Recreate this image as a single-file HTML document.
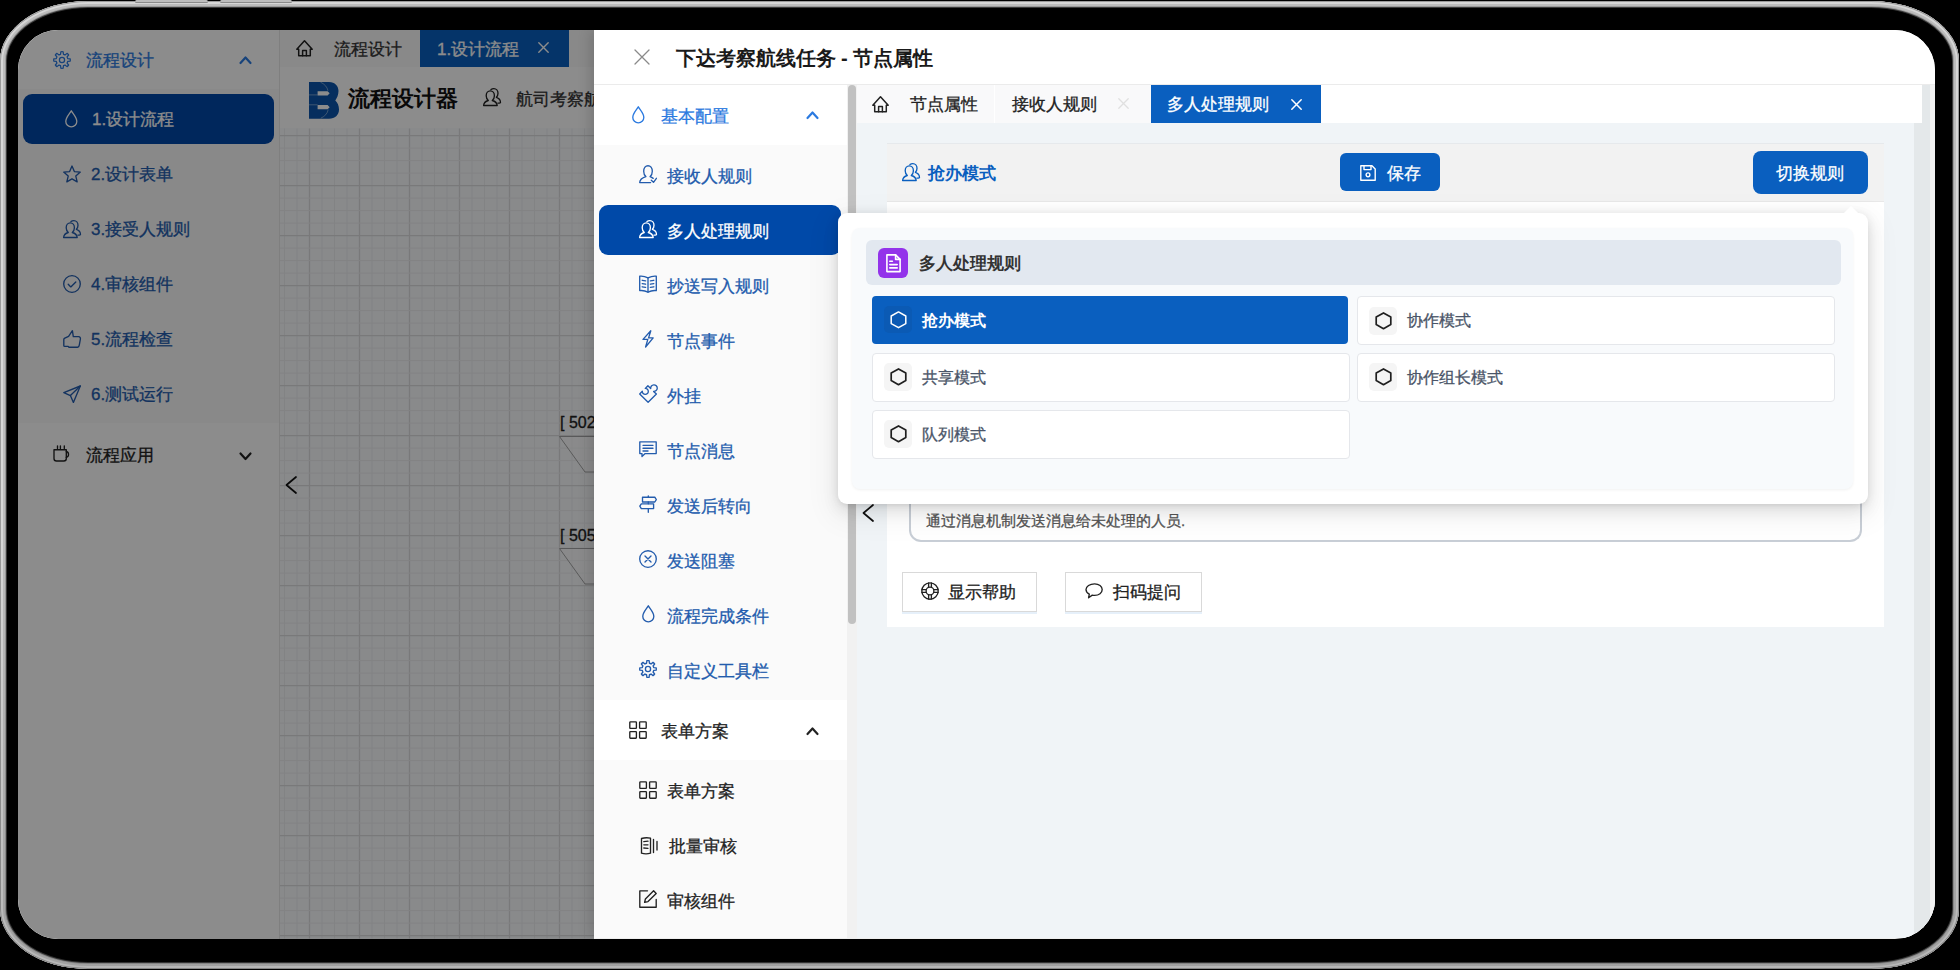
<!DOCTYPE html>
<html><head><meta charset="utf-8">
<style>
*{box-sizing:border-box;margin:0;padding:0}
html,body{width:1960px;height:970px;overflow:hidden;background:#000}
body{position:relative;font-family:"Liberation Sans",sans-serif;}
.abs{position:absolute}
svg.ic{position:absolute;overflow:visible}
.frame{position:absolute;left:0;top:1px;width:1959px;height:968px;border-radius:88px/60px;background:#000;
 box-shadow:inset 0 0 0 1px #9a9a9a,inset 0 0 0 3px #d6d6d6,inset 0 0 0 5px #bcbcbc,inset 0 0 0 6px #9a9a9a,inset 0 0 0 7px #3a3a3a}
.screen{position:absolute;left:18px;top:30px;width:1917px;height:909px;border-radius:40px;overflow:hidden;background:#fff}
.inner{position:absolute;left:-18px;top:-30px;width:1960px;height:970px}
.t{position:absolute;white-space:nowrap;line-height:1}
</style></head><body>
<div class="frame"></div>
<div class="abs" style="left:0;top:1px;width:1959px;height:968px;border-radius:88px/60px;background:linear-gradient(rgba(0,0,0,0) 55%,rgba(0,0,0,.15))"></div>
<div class="abs" style="left:135px;top:0;width:73px;height:3px;border-radius:2px;background:#bdbdbd;box-shadow:inset 0 -1px 0 #8a8a8a"></div>
<div class="abs" style="left:219.5px;top:0;width:72px;height:3px;border-radius:2px;background:#bdbdbd;box-shadow:inset 0 -1px 0 #8a8a8a"></div>
<div class="screen"><div class="inner">

<div class="abs" style="left:18px;top:30px;width:262px;height:909px;background:#fff;border-right:1px solid #e8e8e8"></div>
<div class="abs" style="left:18px;top:89px;width:261px;height:334px;background:#fafafa"></div>
<svg class="ic" style="left:53px;top:50.5px;width:18px;height:18px" viewBox="0 0 18 18" fill="none" stroke="#2b7ae0" stroke-width="1.25" stroke-linecap="round" stroke-linejoin="round"><path d="M7.57 3.28L7.84 0.78A8.3 8.3 0 0 1 10.16 0.78L10.43 3.28A5.9 5.9 0 0 1 12.04 3.94L12.04 3.94L14.00 2.37A8.3 8.3 0 0 1 15.63 4.00L14.06 5.96A5.9 5.9 0 0 1 14.72 7.57L14.72 7.57L17.22 7.84A8.3 8.3 0 0 1 17.22 10.16L14.72 10.43A5.9 5.9 0 0 1 14.06 12.04L14.06 12.04L15.63 14.00A8.3 8.3 0 0 1 14.00 15.63L12.04 14.06A5.9 5.9 0 0 1 10.43 14.72L10.43 14.72L10.16 17.22A8.3 8.3 0 0 1 7.84 17.22L7.57 14.72A5.9 5.9 0 0 1 5.96 14.06L5.96 14.06L4.00 15.63A8.3 8.3 0 0 1 2.37 14.00L3.94 12.04A5.9 5.9 0 0 1 3.28 10.43L3.28 10.43L0.78 10.16A8.3 8.3 0 0 1 0.78 7.84L3.28 7.57A5.9 5.9 0 0 1 3.94 5.96L3.94 5.96L2.37 4.00A8.3 8.3 0 0 1 4.00 2.37L5.96 3.94A5.9 5.9 0 0 1 7.57 3.28Z"/><circle cx="9" cy="9" r="2.6"/></svg>
<div class="t" style="left:86px;top:51.5px;font-size:17px;color:#2b7ae0;font-weight:normal;-webkit-text-stroke:0.3px #2b7ae0;">流程设计</div>
<svg class="ic" style="left:239px;top:54px;width:13px;height:12px" viewBox="0 0 13 12" fill="none" stroke="#2b7ae0" stroke-width="2.2" stroke-linecap="round" stroke-linejoin="round"><path d="M1.5 9L6.5 3.5L11.5 9"/></svg>
<div class="abs" style="left:23px;top:94px;width:251px;height:50px;background:#0047a8;border-radius:9px"></div>
<svg class="ic" style="left:65px;top:110px;width:13px;height:18px" viewBox="0 0 13 18" fill="none" stroke="#fff" stroke-width="1.3" stroke-linecap="round" stroke-linejoin="round"><path d="M6.3 0.8C5 3.5 0.8 7.3 0.8 11.4a5.5 5.5 0 0 0 11 0C11.8 7.3 7.6 3.5 6.3 0.8z"/></svg>
<div class="t" style="left:92px;top:111px;font-size:17px;color:#fff;font-weight:normal;-webkit-text-stroke:0.3px #fff;">1.设计流程</div>
<svg class="ic" style="left:63px;top:165px;width:18px;height:18px" viewBox="0 0 18 18" fill="none" stroke="#235cad" stroke-width="1.35" stroke-linecap="round" stroke-linejoin="round"><polygon points="9,1 11.35,6.56 17.3,7.08 12.8,11.04 14.17,16.8 9,13.8 3.83,16.8 5.2,11.04 0.7,7.08 6.65,6.56"/></svg>
<div class="t" style="left:91px;top:165.5px;font-size:17px;color:#235cad;font-weight:normal;-webkit-text-stroke:0.3px #235cad;">2.设计表单</div>
<svg class="ic" style="left:63px;top:220px;width:18px;height:18px" viewBox="0 0 18 18" fill="none" stroke="#235cad" stroke-width="1.35" stroke-linecap="round" stroke-linejoin="round"><path d="M5.3 12.5C4.3 11.6 3.2 9.9 3.2 7.7C3.2 4.9 5 2.9 7.3 2.9S11.4 4.9 11.4 7.7C11.4 9.9 10.3 11.6 9.3 12.5C12 13.2 14 14.9 14.2 17.5H0.6C0.8 14.9 2.7 13.2 5.3 12.5Z"/><path d="M8 1.6C8.8 0.9 9.8 0.6 10.9 0.6C13.2 0.6 15 2.6 15 5.3C15 7.1 14.2 8.5 13.4 9.3C15.8 10.1 17.4 11.6 17.5 14.2C17.5 14.9 16.9 15.1 14.9 15.1"/></svg>
<div class="t" style="left:91px;top:220.5px;font-size:17px;color:#235cad;font-weight:normal;-webkit-text-stroke:0.3px #235cad;">3.接受人规则</div>
<svg class="ic" style="left:63px;top:275px;width:18px;height:18px" viewBox="0 0 18 18" fill="none" stroke="#235cad" stroke-width="1.35" stroke-linecap="round" stroke-linejoin="round"><circle cx="9" cy="9" r="8.3"/><path d="M5.2 9.3l2.6 2.6 5-5"/></svg>
<div class="t" style="left:91px;top:275.5px;font-size:17px;color:#235cad;font-weight:normal;-webkit-text-stroke:0.3px #235cad;">4.审核组件</div>
<svg class="ic" style="left:63px;top:330px;width:18px;height:18px" viewBox="0 0 18 18" fill="none" stroke="#235cad" stroke-width="1.35" stroke-linecap="round" stroke-linejoin="round"><path d="M9.4 0.7L10.3 6.6H15.6C16.9 6.6 17.6 7.8 17.4 9L16.3 15.2C16.1 16.3 15.6 17.2 14.6 17.2H5.8L5.2 16.4H1.8C1.2 16.4 0.8 16 0.8 15.4V9.6C0.8 8.9 1.2 8.4 1.8 8.1L5.6 6.3Z"/></svg>
<div class="t" style="left:91px;top:330.5px;font-size:17px;color:#235cad;font-weight:normal;-webkit-text-stroke:0.3px #235cad;">5.流程检查</div>
<svg class="ic" style="left:63px;top:385px;width:18px;height:18px" viewBox="0 0 18 18" fill="none" stroke="#235cad" stroke-width="1.35" stroke-linecap="round" stroke-linejoin="round"><path d="M17.3 1L0.8 7.6L7.4 10.6L10.4 17.4Z"/><path d="M17.3 1L7.4 10.6"/></svg>
<div class="t" style="left:91px;top:385.5px;font-size:17px;color:#235cad;font-weight:normal;-webkit-text-stroke:0.3px #235cad;">6.测试运行</div>
<svg class="ic" style="left:52.5px;top:445px;width:18px;height:17px" viewBox="0 0 18 17" fill="none" stroke="#222" stroke-width="1.35" stroke-linecap="round" stroke-linejoin="round"><path d="M1 4.7H13.3V13.5A2.5 2.5 0 0 1 10.8 16H3.5A2.5 2.5 0 0 1 1 13.5Z"/><path d="M13.3 6.5A3 3 0 0 1 13.3 12.3"/><path d="M4.5 0.8V3.5M7.4 0.8V3.5M11.3 0.8V3.5"/></svg>
<div class="t" style="left:86px;top:447px;font-size:17px;color:#222;font-weight:normal;-webkit-text-stroke:0.3px #222;">流程应用</div>
<svg class="ic" style="left:239px;top:450px;width:13px;height:12px" viewBox="0 0 13 12" fill="none" stroke="#222" stroke-width="2.2" stroke-linecap="round" stroke-linejoin="round"><path d="M1.5 3.5L6.5 9L11.5 3.5"/></svg>
<div class="abs" style="left:280px;top:30px;width:314px;height:37px;background:#fafafa"></div>
<svg class="ic" style="left:296px;top:40px;width:17px;height:17px" viewBox="0 0 17 17" fill="none" stroke="#222" stroke-width="1.5" stroke-linecap="round" stroke-linejoin="round"><path d="M0.8 9.3L8.5 0.8L16.2 9.3H14.3V15.7H2.7V9.3Z"/><path d="M6.6 15.7V10.6H10.4V15.7"/></svg>
<div class="t" style="left:334px;top:41px;font-size:17px;color:#333;font-weight:normal;-webkit-text-stroke:0.3px #333;">流程设计</div>
<div class="abs" style="left:420px;top:30px;width:149px;height:37px;background:#0a5fbf"></div>
<div class="t" style="left:437px;top:41px;font-size:17px;color:#fff;font-weight:normal;-webkit-text-stroke:0.3px #fff;">1.设计流程</div>
<svg class="ic" style="left:538px;top:42px;width:11px;height:11px" viewBox="0 0 11 11" fill="none" stroke="#fff" stroke-width="1.4" stroke-linecap="round" stroke-linejoin="round"><path d="M0.8 0.8L10.2 10.2M10.2 0.8L0.8 10.2"/></svg>
<div class="abs" style="left:280px;top:67px;width:314px;height:61px;background:#fff"></div>
<svg class="ic" style="left:308.5px;top:82px;width:30px;height:37px" viewBox="0 0 30 37"><path d="M0 0H20C26 0 29.5 4 29.5 9C29.5 13 27.8 16.3 26.3 18.4C28.5 20.5 30 23.5 30 27.5C30 33 26 36.7 20 36.7H0Z" fill="#0b55ab"/><path d="M8.6 9.3H18.6L20.7 11.35L18.6 13.4H8.6ZM8.6 23.1H18.6L20.7 25.15L18.6 27.2H8.6Z" fill="#fff"/><path d="M0 12.9H8.6M0 22.8H8.6M11.5 0.2C15.5 2 18.2 4.8 19 8.8M11.8 36.2C15.8 34.4 18.5 31.5 19.2 27.6" fill="none" stroke="#fff" stroke-width="0.6" opacity=".7"/></svg>
<div class="t" style="left:347.5px;top:88px;font-size:22px;color:#111;font-weight:bold;">流程设计器</div>
<svg class="ic" style="left:482.5px;top:88px;width:18px;height:18px" viewBox="0 0 18 18" fill="none" stroke="#222" stroke-width="1.35" stroke-linecap="round" stroke-linejoin="round"><path d="M5.3 12.5C4.3 11.6 3.2 9.9 3.2 7.7C3.2 4.9 5 2.9 7.3 2.9S11.4 4.9 11.4 7.7C11.4 9.9 10.3 11.6 9.3 12.5C12 13.2 14 14.9 14.2 17.5H0.6C0.8 14.9 2.7 13.2 5.3 12.5Z"/><path d="M8 1.6C8.8 0.9 9.8 0.6 10.9 0.6C13.2 0.6 15 2.6 15 5.3C15 7.1 14.2 8.5 13.4 9.3C15.8 10.1 17.4 11.6 17.5 14.2C17.5 14.9 16.9 15.1 14.9 15.1"/></svg>
<div class="t" style="left:516px;top:90.5px;font-size:17px;color:#333;font-weight:normal;-webkit-text-stroke:0.3px #333;">航司考察航线</div>
<svg class="ic" style="left:280px;top:128px;width:314px;height:811px;background:#f9fbfe" viewBox="0 0 314 810"><path d="M4.50 0V810" stroke="#edeef0" stroke-width="1.0"/><path d="M17.00 0V810" stroke="#edeef0" stroke-width="1.0"/><path d="M29.50 0V810" stroke="#dcdddf" stroke-width="1.3"/><path d="M42.00 0V810" stroke="#edeef0" stroke-width="1.0"/><path d="M54.50 0V810" stroke="#edeef0" stroke-width="1.0"/><path d="M67.00 0V810" stroke="#edeef0" stroke-width="1.0"/><path d="M79.50 0V810" stroke="#dcdddf" stroke-width="1.3"/><path d="M92.00 0V810" stroke="#edeef0" stroke-width="1.0"/><path d="M104.50 0V810" stroke="#edeef0" stroke-width="1.0"/><path d="M117.00 0V810" stroke="#edeef0" stroke-width="1.0"/><path d="M129.50 0V810" stroke="#dcdddf" stroke-width="1.3"/><path d="M142.00 0V810" stroke="#edeef0" stroke-width="1.0"/><path d="M154.50 0V810" stroke="#edeef0" stroke-width="1.0"/><path d="M167.00 0V810" stroke="#edeef0" stroke-width="1.0"/><path d="M179.50 0V810" stroke="#dcdddf" stroke-width="1.3"/><path d="M192.00 0V810" stroke="#edeef0" stroke-width="1.0"/><path d="M204.50 0V810" stroke="#edeef0" stroke-width="1.0"/><path d="M217.00 0V810" stroke="#edeef0" stroke-width="1.0"/><path d="M229.50 0V810" stroke="#dcdddf" stroke-width="1.3"/><path d="M242.00 0V810" stroke="#edeef0" stroke-width="1.0"/><path d="M254.50 0V810" stroke="#edeef0" stroke-width="1.0"/><path d="M267.00 0V810" stroke="#edeef0" stroke-width="1.0"/><path d="M279.50 0V810" stroke="#dcdddf" stroke-width="1.3"/><path d="M292.00 0V810" stroke="#edeef0" stroke-width="1.0"/><path d="M304.50 0V810" stroke="#edeef0" stroke-width="1.0"/><path d="M0 7.10H314" stroke="#dcdddf" stroke-width="1.3"/><path d="M0 19.60H314" stroke="#edeef0" stroke-width="1.0"/><path d="M0 32.10H314" stroke="#edeef0" stroke-width="1.0"/><path d="M0 44.60H314" stroke="#edeef0" stroke-width="1.0"/><path d="M0 57.10H314" stroke="#dcdddf" stroke-width="1.3"/><path d="M0 69.60H314" stroke="#edeef0" stroke-width="1.0"/><path d="M0 82.10H314" stroke="#edeef0" stroke-width="1.0"/><path d="M0 94.60H314" stroke="#edeef0" stroke-width="1.0"/><path d="M0 107.10H314" stroke="#dcdddf" stroke-width="1.3"/><path d="M0 119.60H314" stroke="#edeef0" stroke-width="1.0"/><path d="M0 132.10H314" stroke="#edeef0" stroke-width="1.0"/><path d="M0 144.60H314" stroke="#edeef0" stroke-width="1.0"/><path d="M0 157.10H314" stroke="#dcdddf" stroke-width="1.3"/><path d="M0 169.60H314" stroke="#edeef0" stroke-width="1.0"/><path d="M0 182.10H314" stroke="#edeef0" stroke-width="1.0"/><path d="M0 194.60H314" stroke="#edeef0" stroke-width="1.0"/><path d="M0 207.10H314" stroke="#dcdddf" stroke-width="1.3"/><path d="M0 219.60H314" stroke="#edeef0" stroke-width="1.0"/><path d="M0 232.10H314" stroke="#edeef0" stroke-width="1.0"/><path d="M0 244.60H314" stroke="#edeef0" stroke-width="1.0"/><path d="M0 257.10H314" stroke="#dcdddf" stroke-width="1.3"/><path d="M0 269.60H314" stroke="#edeef0" stroke-width="1.0"/><path d="M0 282.10H314" stroke="#edeef0" stroke-width="1.0"/><path d="M0 294.60H314" stroke="#edeef0" stroke-width="1.0"/><path d="M0 307.10H314" stroke="#dcdddf" stroke-width="1.3"/><path d="M0 319.60H314" stroke="#edeef0" stroke-width="1.0"/><path d="M0 332.10H314" stroke="#edeef0" stroke-width="1.0"/><path d="M0 344.60H314" stroke="#edeef0" stroke-width="1.0"/><path d="M0 357.10H314" stroke="#dcdddf" stroke-width="1.3"/><path d="M0 369.60H314" stroke="#edeef0" stroke-width="1.0"/><path d="M0 382.10H314" stroke="#edeef0" stroke-width="1.0"/><path d="M0 394.60H314" stroke="#edeef0" stroke-width="1.0"/><path d="M0 407.10H314" stroke="#dcdddf" stroke-width="1.3"/><path d="M0 419.60H314" stroke="#edeef0" stroke-width="1.0"/><path d="M0 432.10H314" stroke="#edeef0" stroke-width="1.0"/><path d="M0 444.60H314" stroke="#edeef0" stroke-width="1.0"/><path d="M0 457.10H314" stroke="#dcdddf" stroke-width="1.3"/><path d="M0 469.60H314" stroke="#edeef0" stroke-width="1.0"/><path d="M0 482.10H314" stroke="#edeef0" stroke-width="1.0"/><path d="M0 494.60H314" stroke="#edeef0" stroke-width="1.0"/><path d="M0 507.10H314" stroke="#dcdddf" stroke-width="1.3"/><path d="M0 519.60H314" stroke="#edeef0" stroke-width="1.0"/><path d="M0 532.10H314" stroke="#edeef0" stroke-width="1.0"/><path d="M0 544.60H314" stroke="#edeef0" stroke-width="1.0"/><path d="M0 557.10H314" stroke="#dcdddf" stroke-width="1.3"/><path d="M0 569.60H314" stroke="#edeef0" stroke-width="1.0"/><path d="M0 582.10H314" stroke="#edeef0" stroke-width="1.0"/><path d="M0 594.60H314" stroke="#edeef0" stroke-width="1.0"/><path d="M0 607.10H314" stroke="#dcdddf" stroke-width="1.3"/><path d="M0 619.60H314" stroke="#edeef0" stroke-width="1.0"/><path d="M0 632.10H314" stroke="#edeef0" stroke-width="1.0"/><path d="M0 644.60H314" stroke="#edeef0" stroke-width="1.0"/><path d="M0 657.10H314" stroke="#dcdddf" stroke-width="1.3"/><path d="M0 669.60H314" stroke="#edeef0" stroke-width="1.0"/><path d="M0 682.10H314" stroke="#edeef0" stroke-width="1.0"/><path d="M0 694.60H314" stroke="#edeef0" stroke-width="1.0"/><path d="M0 707.10H314" stroke="#dcdddf" stroke-width="1.3"/><path d="M0 719.60H314" stroke="#edeef0" stroke-width="1.0"/><path d="M0 732.10H314" stroke="#edeef0" stroke-width="1.0"/><path d="M0 744.60H314" stroke="#edeef0" stroke-width="1.0"/><path d="M0 757.10H314" stroke="#dcdddf" stroke-width="1.3"/><path d="M0 769.60H314" stroke="#edeef0" stroke-width="1.0"/><path d="M0 782.10H314" stroke="#edeef0" stroke-width="1.0"/><path d="M0 794.60H314" stroke="#edeef0" stroke-width="1.0"/><path d="M0 807.10H314" stroke="#dcdddf" stroke-width="1.3"/></svg>
<svg class="ic" style="left:285px;top:476px;width:12px;height:18px" viewBox="0 0 12 18" fill="none" stroke="#111" stroke-width="1.7" stroke-linecap="round" stroke-linejoin="round"><path d="M11 1L1.5 9L11 17"/></svg>
<div class="t" style="left:560px;top:415px;font-size:16px;color:#222;font-weight:normal;-webkit-text-stroke:0.3px #222;">[ 502</div>
<div class="t" style="left:560px;top:528px;font-size:16px;color:#222;font-weight:normal;-webkit-text-stroke:0.3px #222;">[ 505</div>
<svg class="ic" style="left:559px;top:436px;width:40px;height:40px" viewBox="0 0 40 40"><path d="M0.5 0.5H40V36H26Z" fill="rgba(255,255,255,.35)" stroke="none"/><path d="M0.5 0.5H40M0.5 0.5L26 36H40" fill="none" stroke="#9a9a9a" stroke-width="0.9"/></svg>
<svg class="ic" style="left:559px;top:548px;width:40px;height:40px" viewBox="0 0 40 40"><path d="M0.5 0.5H40V36H26Z" fill="rgba(255,255,255,.35)" stroke="none"/><path d="M0.5 0.5H40M0.5 0.5L26 36H40" fill="none" stroke="#9a9a9a" stroke-width="0.9"/></svg>
<div class="abs" style="left:18px;top:30px;width:576px;height:909px;background:rgba(0,0,0,.45)"></div>
<div class="abs" style="left:594px;top:30px;width:1341px;height:908px;background:#fff;box-shadow:-4px 0 12px rgba(0,0,0,.15)"></div>
<svg class="ic" style="left:634px;top:49px;width:16px;height:16px" viewBox="0 0 16 16" fill="none" stroke="#8a8a8a" stroke-width="1.3" stroke-linecap="round" stroke-linejoin="round"><path d="M1 1L15 15M15 1L1 15"/></svg>
<div class="t" style="left:675.5px;top:48px;font-size:20px;color:#1a1a1a;font-weight:bold;">下达考察航线任务 - 节点属性</div>
<div class="abs" style="left:594px;top:84px;width:1341px;height:1px;background:#ebebeb"></div>
<div class="abs" style="left:594px;top:85px;width:253px;height:853px;background:#fff"></div>
<div class="abs" style="left:594px;top:145px;width:253px;height:555px;background:#fafafa"></div>
<svg class="ic" style="left:632px;top:106px;width:13px;height:18px" viewBox="0 0 13 18" fill="none" stroke="#2b7ae0" stroke-width="1.35" stroke-linecap="round" stroke-linejoin="round"><path d="M6.3 0.8C5 3.5 0.8 7.3 0.8 11.4a5.5 5.5 0 0 0 11 0C11.8 7.3 7.6 3.5 6.3 0.8z"/></svg>
<div class="t" style="left:661px;top:108px;font-size:17px;color:#2b7ae0;font-weight:normal;-webkit-text-stroke:0.3px #2b7ae0;">基本配置</div>
<svg class="ic" style="left:806px;top:109px;width:13px;height:12px" viewBox="0 0 13 12" fill="none" stroke="#2b7ae0" stroke-width="2.2" stroke-linecap="round" stroke-linejoin="round"><path d="M1.5 9L6.5 3.5L11.5 9"/></svg>
<div class="abs" style="left:599px;top:205px;width:242px;height:50px;background:#0049a8;border-radius:9px"></div>
<svg class="ic" style="left:639px;top:165px;width:18px;height:18px" viewBox="0 0 18 18" fill="none" stroke="#235cad" stroke-width="1.35" stroke-linecap="round" stroke-linejoin="round"><path d="M6.9 11.6C5.7 10.7 4.7 8.8 4.7 6.3C4.7 3 6.6 0.7 9 0.7S13.3 3 13.3 6.3C13.3 8.8 12.3 10.7 11.1 11.6C12.2 12 13.2 12.6 14.2 13.4M11.6 17.6H0.7C0.8 14.6 3.5 12.6 6.9 11.6"/><path d="M12.3 15.3L14.5 17.3L17.4 13.3"/></svg>
<div class="t" style="left:667px;top:167.5px;font-size:17px;color:#235cad;font-weight:normal;-webkit-text-stroke:0.3px #235cad;">接收人规则</div>
<svg class="ic" style="left:639px;top:220px;width:18px;height:18px" viewBox="0 0 18 18" fill="none" stroke="#fff" stroke-width="1.35" stroke-linecap="round" stroke-linejoin="round"><path d="M5.3 12.5C4.3 11.6 3.2 9.9 3.2 7.7C3.2 4.9 5 2.9 7.3 2.9S11.4 4.9 11.4 7.7C11.4 9.9 10.3 11.6 9.3 12.5C12 13.2 14 14.9 14.2 17.5H0.6C0.8 14.9 2.7 13.2 5.3 12.5Z"/><path d="M8 1.6C8.8 0.9 9.8 0.6 10.9 0.6C13.2 0.6 15 2.6 15 5.3C15 7.1 14.2 8.5 13.4 9.3C15.8 10.1 17.4 11.6 17.5 14.2C17.5 14.9 16.9 15.1 14.9 15.1"/></svg>
<div class="t" style="left:667px;top:222.5px;font-size:17px;color:#fff;font-weight:normal;-webkit-text-stroke:0.3px #fff;">多人处理规则</div>
<svg class="ic" style="left:639px;top:275px;width:18px;height:18px" viewBox="0 0 18 18" fill="none" stroke="#235cad" stroke-width="1.35" stroke-linecap="round" stroke-linejoin="round"><path d="M0.7 1.2V15.6Q5 15 9 17.2Q13 15 17.3 15.6V1.2Q13 0.8 9 2.8Q5 0.8 0.7 1.2Z"/><path d="M9 2.8V17M3.2 5.3L6.6 5.9M3.2 8.6L6.6 9.2M3.2 11.8L6.6 12.4M11.4 5.9L14.8 5.3M11.4 9.2L14.8 8.6M11.4 12.4L14.8 11.8"/></svg>
<div class="t" style="left:667px;top:277.5px;font-size:17px;color:#235cad;font-weight:normal;-webkit-text-stroke:0.3px #235cad;">抄送写入规则</div>
<svg class="ic" style="left:642px;top:330px;width:12px;height:18px" viewBox="0 0 12 18" fill="none" stroke="#235cad" stroke-width="1.35" stroke-linecap="round" stroke-linejoin="round"><path d="M8.8 0.8L1 9.4H5.8L3.6 17L11.2 7.9H6.6Z"/></svg>
<div class="t" style="left:667px;top:332.5px;font-size:17px;color:#235cad;font-weight:normal;-webkit-text-stroke:0.3px #235cad;">节点事件</div>
<svg class="ic" style="left:639px;top:385px;width:18px;height:18px" viewBox="0 0 18 18" fill="none" stroke="#235cad" stroke-width="1.35" stroke-linecap="round" stroke-linejoin="round"><path d="M9.1 17.3L0.7 8.9L3.3 6.3A3 3 0 1 0 6.3 3.4L8.9 0.8L11.7 3.6A3.3 3.3 0 1 1 14.6 6.4L17.4 9.1Z"/></svg>
<div class="t" style="left:667px;top:387.5px;font-size:17px;color:#235cad;font-weight:normal;-webkit-text-stroke:0.3px #235cad;">外挂</div>
<svg class="ic" style="left:639px;top:441px;width:18px;height:16px" viewBox="0 0 18 16" fill="none" stroke="#235cad" stroke-width="1.35" stroke-linecap="round" stroke-linejoin="round"><path d="M0.8 0.8H17.2V12.6H6.2L3 15.6V12.6H0.8Z"/><path d="M4 4.3H14M4 7.2H14M4 10H9"/></svg>
<div class="t" style="left:667px;top:442.5px;font-size:17px;color:#235cad;font-weight:normal;-webkit-text-stroke:0.3px #235cad;">节点消息</div>
<svg class="ic" style="left:639px;top:495px;width:18px;height:18px" viewBox="0 0 18 18" fill="none" stroke="#235cad" stroke-width="1.35" stroke-linecap="round" stroke-linejoin="round"><path d="M3.5 2.2H15.8L17.3 4.6L15.8 7H3.5Z"/><path d="M14.6 8.8H2.3L0.8 11.2L2.3 13.6H14.6Z"/><path d="M9.3 0.8V2.2M9.3 7V8.8M9.3 13.6V17.2"/></svg>
<div class="t" style="left:667px;top:497.5px;font-size:17px;color:#235cad;font-weight:normal;-webkit-text-stroke:0.3px #235cad;">发送后转向</div>
<svg class="ic" style="left:639px;top:550px;width:18px;height:18px" viewBox="0 0 18 18" fill="none" stroke="#235cad" stroke-width="1.35" stroke-linecap="round" stroke-linejoin="round"><circle cx="9" cy="9" r="8.3"/><path d="M6 6l6 6M12 6l-6 6"/></svg>
<div class="t" style="left:667px;top:552.5px;font-size:17px;color:#235cad;font-weight:normal;-webkit-text-stroke:0.3px #235cad;">发送阻塞</div>
<svg class="ic" style="left:642px;top:605px;width:13px;height:18px" viewBox="0 0 13 18" fill="none" stroke="#235cad" stroke-width="1.35" stroke-linecap="round" stroke-linejoin="round"><path d="M6.3 0.8C5 3.5 0.8 7.3 0.8 11.4a5.5 5.5 0 0 0 11 0C11.8 7.3 7.6 3.5 6.3 0.8z"/></svg>
<div class="t" style="left:667px;top:607.5px;font-size:17px;color:#235cad;font-weight:normal;-webkit-text-stroke:0.3px #235cad;">流程完成条件</div>
<svg class="ic" style="left:639px;top:660px;width:18px;height:18px" viewBox="0 0 18 18" fill="none" stroke="#235cad" stroke-width="1.35" stroke-linecap="round" stroke-linejoin="round"><path d="M7.57 3.28L7.84 0.78A8.3 8.3 0 0 1 10.16 0.78L10.43 3.28A5.9 5.9 0 0 1 12.04 3.94L12.04 3.94L14.00 2.37A8.3 8.3 0 0 1 15.63 4.00L14.06 5.96A5.9 5.9 0 0 1 14.72 7.57L14.72 7.57L17.22 7.84A8.3 8.3 0 0 1 17.22 10.16L14.72 10.43A5.9 5.9 0 0 1 14.06 12.04L14.06 12.04L15.63 14.00A8.3 8.3 0 0 1 14.00 15.63L12.04 14.06A5.9 5.9 0 0 1 10.43 14.72L10.43 14.72L10.16 17.22A8.3 8.3 0 0 1 7.84 17.22L7.57 14.72A5.9 5.9 0 0 1 5.96 14.06L5.96 14.06L4.00 15.63A8.3 8.3 0 0 1 2.37 14.00L3.94 12.04A5.9 5.9 0 0 1 3.28 10.43L3.28 10.43L0.78 10.16A8.3 8.3 0 0 1 0.78 7.84L3.28 7.57A5.9 5.9 0 0 1 3.94 5.96L3.94 5.96L2.37 4.00A8.3 8.3 0 0 1 4.00 2.37L5.96 3.94A5.9 5.9 0 0 1 7.57 3.28Z"/><circle cx="9" cy="9" r="2.6"/></svg>
<div class="t" style="left:667px;top:662.5px;font-size:17px;color:#235cad;font-weight:normal;-webkit-text-stroke:0.3px #235cad;">自定义工具栏</div>
<div class="abs" style="left:594px;top:700px;width:253px;height:60px;background:#fff"></div>
<svg class="ic" style="left:629px;top:721px;width:18px;height:18px" viewBox="0 0 18 18" fill="none" stroke="#222" stroke-width="1.35" stroke-linecap="round" stroke-linejoin="round"><rect x="0.8" y="0.8" width="6.6" height="6.6" rx="0.6"/><rect x="10.6" y="0.8" width="6.6" height="6.6" rx="0.6"/><rect x="0.8" y="10.6" width="6.6" height="6.6" rx="0.6"/><rect x="10.6" y="10.6" width="6.6" height="6.6" rx="0.6"/></svg>
<div class="t" style="left:661px;top:723px;font-size:17px;color:#222;font-weight:normal;-webkit-text-stroke:0.3px #222;">表单方案</div>
<svg class="ic" style="left:806px;top:725px;width:13px;height:12px" viewBox="0 0 13 12" fill="none" stroke="#222" stroke-width="2.2" stroke-linecap="round" stroke-linejoin="round"><path d="M1.5 9L6.5 3.5L11.5 9"/></svg>
<div class="abs" style="left:594px;top:760px;width:253px;height:178px;background:#fafafa"></div>
<svg class="ic" style="left:639px;top:780.5px;width:18px;height:18px" viewBox="0 0 18 18" fill="none" stroke="#222" stroke-width="1.35" stroke-linecap="round" stroke-linejoin="round"><rect x="0.8" y="0.8" width="6.6" height="6.6" rx="0.6"/><rect x="10.6" y="0.8" width="6.6" height="6.6" rx="0.6"/><rect x="0.8" y="10.6" width="6.6" height="6.6" rx="0.6"/><rect x="10.6" y="10.6" width="6.6" height="6.6" rx="0.6"/></svg>
<div class="t" style="left:667px;top:782.5px;font-size:17px;color:#222;font-weight:normal;-webkit-text-stroke:0.3px #222;">表单方案</div>
<svg class="ic" style="left:640px;top:836.5px;width:18px;height:18px" viewBox="0 0 18 18" fill="none" stroke="#222" stroke-width="1.35" stroke-linecap="round" stroke-linejoin="round"><path d="M1.5 1.5Q6 0.2 10.5 1.2V16.2Q6 17.6 1.5 16.2Z"/><path d="M3.8 4.6L8 4.2M3.8 7.8H8M3.8 11L8 11.3M13.5 2.5V15.5M17 4.5V13"/></svg>
<div class="t" style="left:669px;top:837.5px;font-size:17px;color:#222;font-weight:normal;-webkit-text-stroke:0.3px #222;">批量审核</div>
<svg class="ic" style="left:639px;top:890px;width:18px;height:18px" viewBox="0 0 18 18" fill="none" stroke="#222" stroke-width="1.35" stroke-linecap="round" stroke-linejoin="round"><path d="M17.2 9.5V17.2H0.8V0.8H8.5"/><path d="M14.6 0.8L17.2 3.4L9 11.6L5.6 12.4L6.4 9Z"/></svg>
<div class="t" style="left:667px;top:892.5px;font-size:17px;color:#222;font-weight:normal;-webkit-text-stroke:0.3px #222;">审核组件</div>
<div class="abs" style="left:847px;top:85px;width:10px;height:853px;background:#f1f1f1"></div>
<div class="abs" style="left:848px;top:85px;width:8px;height:539px;background:#c1c1c1;border-radius:4px"></div>
<div class="abs" style="left:857px;top:85px;width:1078px;height:853px;background:#f0f4f7"></div>
<div class="abs" style="left:857px;top:85px;width:1065px;height:38px;background:#fff"></div>
<div class="abs" style="left:857px;top:85px;width:137px;height:38px;background:#f9f9fa"></div>
<div class="abs" style="left:995px;top:85px;width:156px;height:38px;background:#f9f9fa"></div>
<svg class="ic" style="left:872px;top:96px;width:17px;height:17px" viewBox="0 0 17 17" fill="none" stroke="#222" stroke-width="1.5" stroke-linecap="round" stroke-linejoin="round"><path d="M0.8 9.3L8.5 0.8L16.2 9.3H14.3V15.7H2.7V9.3Z"/><path d="M6.6 15.7V10.6H10.4V15.7"/></svg>
<div class="t" style="left:910px;top:96px;font-size:17px;color:#222;font-weight:normal;-webkit-text-stroke:0.3px #222;">节点属性</div>
<div class="t" style="left:1012px;top:96px;font-size:17px;color:#222;font-weight:normal;-webkit-text-stroke:0.3px #222;">接收人规则</div>
<svg class="ic" style="left:1118px;top:98px;width:11px;height:11px" viewBox="0 0 11 11" fill="none" stroke="#e0e0e0" stroke-width="1.3" stroke-linecap="round" stroke-linejoin="round"><path d="M0.8 0.8L10.2 10.2M10.2 0.8L0.8 10.2"/></svg>
<div class="abs" style="left:1151px;top:85px;width:170px;height:38px;background:#0a5fbf"></div>
<div class="t" style="left:1167px;top:96px;font-size:17px;color:#fff;font-weight:normal;-webkit-text-stroke:0.3px #fff;">多人处理规则</div>
<svg class="ic" style="left:1291px;top:98.5px;width:11px;height:11px" viewBox="0 0 11 11" fill="none" stroke="#fff" stroke-width="1.5" stroke-linecap="round" stroke-linejoin="round"><path d="M0.8 0.8L10.2 10.2M10.2 0.8L0.8 10.2"/></svg>
<div class="abs" style="left:1914px;top:123px;width:16px;height:815px;background:#e4e8ea"></div>
<div class="abs" style="left:1922px;top:85px;width:8px;height:38px;background:#e4e8ea"></div>
<div class="abs" style="left:1930px;top:85px;width:5px;height:853px;background:#f2f2f2"></div>
<div class="abs" style="left:887px;top:143px;width:997px;height:484px;background:#fff"></div>
<div class="abs" style="left:887px;top:143px;width:997px;height:59px;background:#f2f2f2;border-top:1px solid #e6e9ec;border-bottom:1px solid #e8e8e8"></div>
<svg class="ic" style="left:902px;top:163px;width:19px;height:18px" viewBox="0 0 19 18" fill="none" stroke="#0a5fbf" stroke-width="1.35" stroke-linecap="round" stroke-linejoin="round"><path d="M5.3 12.5C4.3 11.6 3.2 9.9 3.2 7.7C3.2 4.9 5 2.9 7.3 2.9S11.4 4.9 11.4 7.7C11.4 9.9 10.3 11.6 9.3 12.5C12 13.2 14 14.9 14.2 17.5H0.6C0.8 14.9 2.7 13.2 5.3 12.5Z"/><path d="M8 1.6C8.8 0.9 9.8 0.6 10.9 0.6C13.2 0.6 15 2.6 15 5.3C15 7.1 14.2 8.5 13.4 9.3C15.8 10.1 17.4 11.6 17.5 14.2C17.5 14.9 16.9 15.1 14.9 15.1"/></svg>
<div class="t" style="left:928px;top:165px;font-size:17px;color:#0a5fbf;font-weight:bold;">抢办模式</div>
<div class="abs" style="left:1340px;top:153px;width:100px;height:38px;background:#0a5fbf;border-radius:6px"></div>
<svg class="ic" style="left:1360px;top:165px;width:16px;height:16px" viewBox="0 0 16 16" fill="none" stroke="#fff" stroke-width="1.4" stroke-linecap="round" stroke-linejoin="round"><path d="M0.8 0.8H12L15.2 4V15.2H0.8Z"/><path d="M4 0.8V4.6H11V0.8"/><circle cx="8" cy="9.8" r="1.9"/></svg>
<div class="t" style="left:1387px;top:165px;font-size:17px;color:#fff;font-weight:normal;-webkit-text-stroke:0.3px #fff;">保存</div>
<div class="abs" style="left:1753px;top:151px;width:115px;height:43px;background:#0a5fbf;border-radius:8px"></div>
<div class="t" style="left:1776px;top:165px;font-size:17px;color:#fff;font-weight:normal;-webkit-text-stroke:0.3px #fff;">切换规则</div>
<div class="abs" style="left:909px;top:470px;width:953px;height:72px;border:2px solid #c8ced6;border-top:none;border-radius:0 0 12px 12px;background:#fff"></div>
<div class="t" style="left:926px;top:513px;font-size:15px;color:#555;font-weight:normal;-webkit-text-stroke:0.3px #555;">通过消息机制发送消息给未处理的人员.</div>
<svg class="ic" style="left:862px;top:504px;width:12px;height:18px" viewBox="0 0 12 18" fill="none" stroke="#111" stroke-width="1.7" stroke-linecap="round" stroke-linejoin="round"><path d="M11 1L1.5 9L11 17"/></svg>
<div class="abs" style="left:902px;top:572px;width:135px;height:40px;background:#fff;border:1px solid #d9d9d9;box-shadow:0 2px 0 #e6f0fa"></div>
<svg class="ic" style="left:921px;top:582px;width:18px;height:18px" viewBox="0 0 18 18" fill="none" stroke="#222" stroke-width="1.35" stroke-linecap="round" stroke-linejoin="round"><circle cx="9" cy="9" r="8.2"/><circle cx="9" cy="9" r="3.9"/><path d="M7.6 0.9V5.2M10.4 0.9V5.2M7.6 12.8V17.1M10.4 12.8V17.1M0.9 7.6H5.2M0.9 10.4H5.2M12.8 7.6H17.1M12.8 10.4H17.1"/></svg>
<div class="t" style="left:948px;top:584px;font-size:17px;color:#222;font-weight:normal;-webkit-text-stroke:0.3px #222;">显示帮助</div>
<div class="abs" style="left:1065px;top:572px;width:137px;height:40px;background:#fff;border:1px solid #d9d9d9;box-shadow:0 2px 0 #e6f0fa"></div>
<svg class="ic" style="left:1084.5px;top:582.5px;width:18px;height:16px" viewBox="0 0 18 16" fill="none" stroke="#222" stroke-width="1.35" stroke-linecap="round" stroke-linejoin="round"><path d="M9.6 0.8C14 0.8 17.2 3.3 17.2 6.6S14 12.4 9.6 12.4C8.8 12.4 8 12.3 7.3 12.1L3.6 14.8L4.3 11.2C2.2 10.2 1 8.5 1 6.6C1 3.3 4.8 0.8 9.6 0.8Z"/></svg>
<div class="t" style="left:1113px;top:584px;font-size:17px;color:#222;font-weight:normal;-webkit-text-stroke:0.3px #222;">扫码提问</div>
<div class="abs" style="left:838px;top:213px;width:1030px;height:291px;background:#fff;border-radius:9px;box-shadow:0 6px 16px rgba(0,0,0,.10),0 3px 6px -4px rgba(0,0,0,.12),0 9px 28px 8px rgba(0,0,0,.05),0 0 10px rgba(0,0,0,.06)"></div>
<div class="abs" style="left:1846px;top:208px;width:10px;height:10px;background:#fff;transform:rotate(45deg)"></div>
<div class="abs" style="left:852px;top:228px;width:1001px;height:261px;background:#f8fafc;border-radius:8px;box-shadow:0 1px 3px rgba(0,0,0,.06)"></div>
<div class="abs" style="left:866px;top:240px;width:975px;height:45px;background:#e2e8f0;border-radius:6px"></div>
<div class="abs" style="left:878px;top:248px;width:30px;height:30px;background:#9333ea;border-radius:6px"></div>
<svg class="ic" style="left:886px;top:254px;width:15px;height:18.5px" viewBox="0 0 15 18.5" fill="none" stroke="#fff" stroke-width="1.6" stroke-linecap="round" stroke-linejoin="round"><path d="M0.9 0.9H9.6L14.1 5.4V17.6H0.9Z"/><path d="M9.6 0.9V5.4H14.1M3.8 7.2H6.4M3.8 10.6H11.2M3.8 13.9H11.2"/></svg>
<div class="t" style="left:919px;top:255px;font-size:17px;color:#333;font-weight:bold;">多人处理规则</div>
<div class="abs" style="left:872px;top:296px;width:476px;height:48px;background:#0a5fbf;border-radius:4px"></div>
<div class="abs" style="left:884px;top:306px;width:28px;height:27px;background:#0b5ab4;border-radius:5px"></div>
<svg class="ic" style="left:889.5px;top:311px;width:17px;height:18px" viewBox="0 0 17 18" fill="none" stroke="#fff" stroke-width="1.5" stroke-linecap="round" stroke-linejoin="round"><path d="M8.5 0.9L15.8 5V12.6L8.5 16.7L1.2 12.6V5Z"/></svg>
<div class="t" style="left:922px;top:312.5px;font-size:16px;color:#fff;font-weight:bold;">抢办模式</div>
<div class="abs" style="left:1357px;top:296px;width:478px;height:49px;background:#fff;border:1px solid #e5e7eb;border-radius:4px"></div>
<div class="abs" style="left:1369px;top:306.5px;width:28px;height:28px;background:#f5f5f5;border-radius:5px"></div>
<svg class="ic" style="left:1374.5px;top:311.5px;width:17px;height:18px" viewBox="0 0 17 18" fill="none" stroke="#1f1f1f" stroke-width="1.7" stroke-linecap="round" stroke-linejoin="round"><path d="M8.5 0.9L15.8 5V12.6L8.5 16.7L1.2 12.6V5Z"/></svg>
<div class="t" style="left:1407px;top:313px;font-size:16px;color:#4a5568;font-weight:normal;-webkit-text-stroke:0.3px #4a5568;">协作模式</div>
<div class="abs" style="left:872px;top:352.5px;width:478px;height:49px;background:#fff;border:1px solid #e5e7eb;border-radius:4px"></div>
<div class="abs" style="left:884px;top:363.0px;width:28px;height:28px;background:#f5f5f5;border-radius:5px"></div>
<svg class="ic" style="left:889.5px;top:368.0px;width:17px;height:18px" viewBox="0 0 17 18" fill="none" stroke="#1f1f1f" stroke-width="1.7" stroke-linecap="round" stroke-linejoin="round"><path d="M8.5 0.9L15.8 5V12.6L8.5 16.7L1.2 12.6V5Z"/></svg>
<div class="t" style="left:922px;top:369.5px;font-size:16px;color:#4a5568;font-weight:normal;-webkit-text-stroke:0.3px #4a5568;">共享模式</div>
<div class="abs" style="left:1357px;top:352.5px;width:478px;height:49px;background:#fff;border:1px solid #e5e7eb;border-radius:4px"></div>
<div class="abs" style="left:1369px;top:363.0px;width:28px;height:28px;background:#f5f5f5;border-radius:5px"></div>
<svg class="ic" style="left:1374.5px;top:368.0px;width:17px;height:18px" viewBox="0 0 17 18" fill="none" stroke="#1f1f1f" stroke-width="1.7" stroke-linecap="round" stroke-linejoin="round"><path d="M8.5 0.9L15.8 5V12.6L8.5 16.7L1.2 12.6V5Z"/></svg>
<div class="t" style="left:1407px;top:369.5px;font-size:16px;color:#4a5568;font-weight:normal;-webkit-text-stroke:0.3px #4a5568;">协作组长模式</div>
<div class="abs" style="left:872px;top:409.5px;width:478px;height:49px;background:#fff;border:1px solid #e5e7eb;border-radius:4px"></div>
<div class="abs" style="left:884px;top:420.0px;width:28px;height:28px;background:#f5f5f5;border-radius:5px"></div>
<svg class="ic" style="left:889.5px;top:425.0px;width:17px;height:18px" viewBox="0 0 17 18" fill="none" stroke="#1f1f1f" stroke-width="1.7" stroke-linecap="round" stroke-linejoin="round"><path d="M8.5 0.9L15.8 5V12.6L8.5 16.7L1.2 12.6V5Z"/></svg>
<div class="t" style="left:922px;top:426.5px;font-size:16px;color:#4a5568;font-weight:normal;-webkit-text-stroke:0.3px #4a5568;">队列模式</div>
</div></div></body></html>
